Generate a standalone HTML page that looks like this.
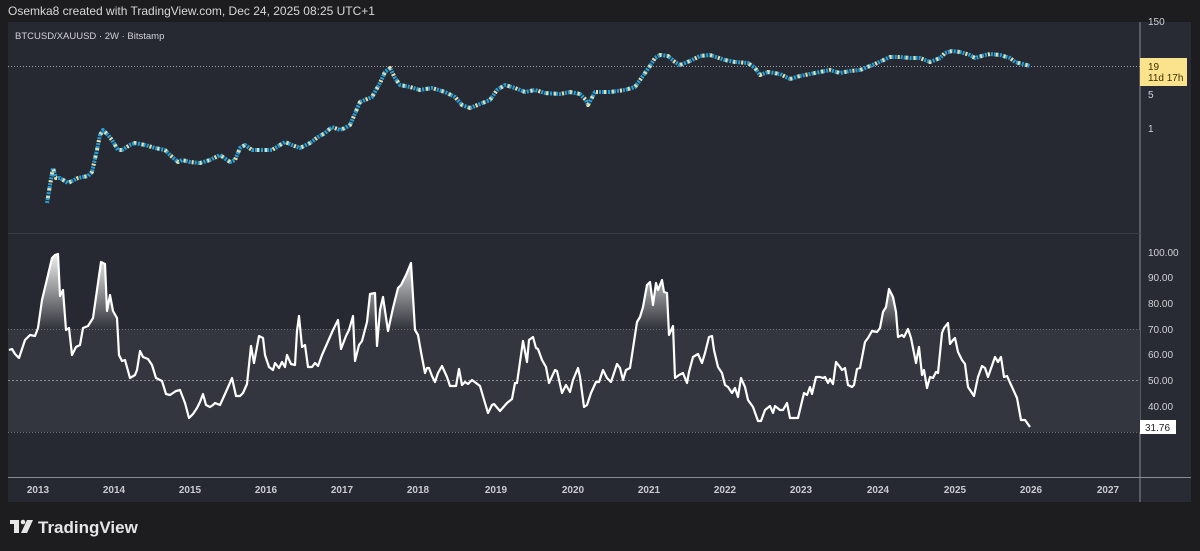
<!DOCTYPE html>
<html><head><meta charset="utf-8"><style>
body{margin:0;width:1200px;height:551px;background:#1d1d1f;overflow:hidden;font-family:"Liberation Sans",sans-serif;}
svg{position:absolute;left:0;top:0}
</style></head><body>
<svg width="1200" height="551" viewBox="0 0 1200 551" xmlns="http://www.w3.org/2000/svg">
<defs>
<linearGradient id="g" x1="0" y1="252" x2="0" y2="329" gradientUnits="userSpaceOnUse">
<stop offset="0" stop-color="#fff" stop-opacity="0.95"/><stop offset="1" stop-color="#fff" stop-opacity="0.05"/></linearGradient>
<clipPath id="c"><rect x="8" y="234" width="1132" height="95"/></clipPath>
</defs>
<text x="8" y="15" font-size="12" fill="#d8d8d8">Osemka8 created with TradingView.com, Dec 24, 2025 08:25 UTC+1</text>
<rect x="8" y="22" width="1183" height="480" fill="#262931"/>
<rect x="1140" y="22" width="51" height="480" fill="#282b33"/>
<line x1="1140" y1="22" x2="1140" y2="502" stroke="#8a8c92" stroke-width="1"/>
<line x1="8" y1="233.5" x2="1140" y2="233.5" stroke="#3a3d45"/>
<line x1="8" y1="477.5" x2="1191" y2="477.5" stroke="#8a8c92"/>
<text x="15" y="39" font-size="9.5" fill="#d0d2d6">BTCUSD/XAUUSD · 2W · Bitstamp</text>
<line x1="8" y1="66.5" x2="1140" y2="66.5" stroke="#9a9ca2" stroke-dasharray="1,2"/>
<g fill="none" stroke-linejoin="round">
<polyline stroke="#2a9fd6" stroke-width="4" stroke-dasharray="2,1" points="47,203 50,185 53,168 56,178 60,178 68,183 78,178 88,176 92,172 97,150 100,135 103,130 108,135 112,140 118,150 122,150 130,145 135,143 145,145 155,148 165,150 170,155 178,162 182,160 190,162 200,163 210,160 220,155 230,162 235,160 240,148 245,145 252,150 262,150 272,150 280,145 285,142 292,145 300,148 310,143 318,137 325,133 332,127 340,130 345,128 350,125 360,102 372,97 380,83 385,72 390,68 395,78 400,85 410,87 420,90 432,88 445,92 455,97 462,105 470,108 480,104 490,100 497,90 505,85 515,88 525,92 535,90 545,93 560,94 570,92 580,94 586,100 588,105 595,92 610,92 625,90 635,87 645,73 650,66 655,58 660,55 668,56 675,62 680,65 690,61 700,56 710,55 725,60 735,62 748,63 755,68 760,75 768,72 780,74 790,79 800,76 810,74 820,72 830,70 840,73 850,71 860,70 875,64 890,57 900,57 910,58 920,58 930,62 940,58 945,53 952,51 960,52 970,55 975,58 985,55 990,54 1000,55 1010,58 1015,62 1030,66"/>
<polyline stroke="#e8e0a8" stroke-width="4" stroke-dasharray="2,6" stroke-dashoffset="3" points="47,203 50,185 53,168 56,178 60,178 68,183 78,178 88,176 92,172 97,150 100,135 103,130 108,135 112,140 118,150 122,150 130,145 135,143 145,145 155,148 165,150 170,155 178,162 182,160 190,162 200,163 210,160 220,155 230,162 235,160 240,148 245,145 252,150 262,150 272,150 280,145 285,142 292,145 300,148 310,143 318,137 325,133 332,127 340,130 345,128 350,125 360,102 372,97 380,83 385,72 390,68 395,78 400,85 410,87 420,90 432,88 445,92 455,97 462,105 470,108 480,104 490,100 497,90 505,85 515,88 525,92 535,90 545,93 560,94 570,92 580,94 586,100 588,105 595,92 610,92 625,90 635,87 645,73 650,66 655,58 660,55 668,56 675,62 680,65 690,61 700,56 710,55 725,60 735,62 748,63 755,68 760,75 768,72 780,74 790,79 800,76 810,74 820,72 830,70 840,73 850,71 860,70 875,64 890,57 900,57 910,58 920,58 930,62 940,58 945,53 952,51 960,52 970,55 975,58 985,55 990,54 1000,55 1010,58 1015,62 1030,66"/>
</g>
<rect x="8" y="329" width="1132" height="103" fill="#33363e"/>
<line x1="8" y1="329.5" x2="1140" y2="329.5" stroke="#6a6d74" stroke-dasharray="1,2"/>
<line x1="8" y1="380.5" x2="1140" y2="380.5" stroke="#8a8d94" stroke-dasharray="2,2"/>
<line x1="8" y1="432.5" x2="1140" y2="432.5" stroke="#6a6d74" stroke-dasharray="1,2"/>
<polygon clip-path="url(#c)" fill="url(#g)" points="9,329 9,350 12,349 15,354 19,358 25,340 30,335 35,336 38,328 42,300 48,275 52,258 55,255 58,254 60,296 63,290 66,330 69,328 72,355 76,347 80,345 83,328 88,326 93,318 97,290 101,262 105,264 107,311 110,295 113,311 117,318 119,355 122,361 125,360 130,378 135,375 137,370 140,351 143,357 148,359 152,365 156,378 162,381 166,394 170,395 173,393 176,391 180,390 185,403 189,418 193,414 197,408 200,402 203,394 206,405 210,407 213,405 215,403 220,405 225,394 229,385 232,378 236,396 240,396 243,393 247,384 251,346 254,363 259,336 263,338 265,355 269,367 273,370 275,363 279,368 282,362 285,367 287,355 291,364 295,365 297,331 299,316 302,347 305,345 308,367 312,367 315,363 318,366 322,355 326,346 333,330 338,320 341,349 346,336 349,330 353,316 355,361 359,345 362,341 367,322 370,294 375,293 377,346 380,310 383,297 388,331 393,308 398,288 401,285 406,275 411,263 415,330 418,335 421,352 425,373 427,368 429,368 432,376 435,382 438,373 442,366 447,377 450,386 456,386 459,369 462,385 465,382 468,384 472,380 480,386 485,403 488,413 492,405 494,404 500,411 507,403 512,399 515,383 517,383 523,341 527,362 529,340 533,337 536,348 538,349 542,360 546,367 549,383 555,370 557,371 562,393 566,385 570,392 573,380 578,368 580,377 584,407 587,405 591,393 596,382 599,382 603,370 607,378 611,382 617,364 620,368 623,380 626,370 630,368 637,322 640,317 643,307 647,285 650,282 653,305 656,283 658,290 662,280 664,292 667,293 669,335 673,326 675,378 679,375 683,373 687,383 689,372 693,357 698,354 702,363 705,353 709,337 712,336 714,350 718,367 722,373 725,385 728,387 732,393 735,388 738,397 741,378 745,387 748,400 753,407 758,421 761,421 765,410 770,406 773,413 775,406 780,410 783,410 787,403 790,418 797,418 798,418 804,393 807,395 810,387 812,394 816,377 820,377 823,378 825,377 828,383 830,379 833,384 836,362 840,367 842,370 845,368 848,385 852,387 854,385 857,369 860,368 865,342 868,338 872,331 877,332 880,328 883,312 886,307 889,289 893,297 896,312 898,337 902,335 904,337 908,329 911,338 916,363 919,347 922,375 924,370 927,388 930,377 933,378 936,372 938,373 942,333 944,328 948,323 950,344 953,340 955,338 958,352 962,360 965,364 968,387 972,393 974,396 978,377 982,366 985,368 988,377 995,357 998,362 1001,357 1004,377 1007,376 1012,387 1017,398 1021,420 1025,420 1030,427 1030,329"/>
<polyline fill="none" stroke="#fff" stroke-width="2.2" stroke-linejoin="round" points="9,350 12,349 15,354 19,358 25,340 30,335 35,336 38,328 42,300 48,275 52,258 55,255 58,254 60,296 63,290 66,330 69,328 72,355 76,347 80,345 83,328 88,326 93,318 97,290 101,262 105,264 107,311 110,295 113,311 117,318 119,355 122,361 125,360 130,378 135,375 137,370 140,351 143,357 148,359 152,365 156,378 162,381 166,394 170,395 173,393 176,391 180,390 185,403 189,418 193,414 197,408 200,402 203,394 206,405 210,407 213,405 215,403 220,405 225,394 229,385 232,378 236,396 240,396 243,393 247,384 251,346 254,363 259,336 263,338 265,355 269,367 273,370 275,363 279,368 282,362 285,367 287,355 291,364 295,365 297,331 299,316 302,347 305,345 308,367 312,367 315,363 318,366 322,355 326,346 333,330 338,320 341,349 346,336 349,330 353,316 355,361 359,345 362,341 367,322 370,294 375,293 377,346 380,310 383,297 388,331 393,308 398,288 401,285 406,275 411,263 415,330 418,335 421,352 425,373 427,368 429,368 432,376 435,382 438,373 442,366 447,377 450,386 456,386 459,369 462,385 465,382 468,384 472,380 480,386 485,403 488,413 492,405 494,404 500,411 507,403 512,399 515,383 517,383 523,341 527,362 529,340 533,337 536,348 538,349 542,360 546,367 549,383 555,370 557,371 562,393 566,385 570,392 573,380 578,368 580,377 584,407 587,405 591,393 596,382 599,382 603,370 607,378 611,382 617,364 620,368 623,380 626,370 630,368 637,322 640,317 643,307 647,285 650,282 653,305 656,283 658,290 662,280 664,292 667,293 669,335 673,326 675,378 679,375 683,373 687,383 689,372 693,357 698,354 702,363 705,353 709,337 712,336 714,350 718,367 722,373 725,385 728,387 732,393 735,388 738,397 741,378 745,387 748,400 753,407 758,421 761,421 765,410 770,406 773,413 775,406 780,410 783,410 787,403 790,418 797,418 798,418 804,393 807,395 810,387 812,394 816,377 820,377 823,378 825,377 828,383 830,379 833,384 836,362 840,367 842,370 845,368 848,385 852,387 854,385 857,369 860,368 865,342 868,338 872,331 877,332 880,328 883,312 886,307 889,289 893,297 896,312 898,337 902,335 904,337 908,329 911,338 916,363 919,347 922,375 924,370 927,388 930,377 933,378 936,372 938,373 942,333 944,328 948,323 950,344 953,340 955,338 958,352 962,360 965,364 968,387 972,393 974,396 978,377 982,366 985,368 988,377 995,357 998,362 1001,357 1004,377 1007,376 1012,387 1017,398 1021,420 1025,420 1030,427"/>
<g font-size="10" fill="#d0d2d6">
<text x="1148" y="25">150</text>
<text x="1148" y="98">5</text>
<text x="1148" y="132">1</text>
<text x="1148" y="256">100.00</text>
<text x="1148" y="281">90.00</text>
<text x="1148" y="307">80.00</text>
<text x="1148" y="333">70.00</text>
<text x="1148" y="358">60.00</text>
<text x="1148" y="384">50.00</text>
<text x="1148" y="410">40.00</text>
</g>
<rect x="1140" y="58" width="47" height="28" fill="#fbe38e"/>
<text x="1148" y="70" font-size="10" fill="#3a3000">19</text>
<text x="1148" y="81" font-size="10" fill="#3a3000">11d 17h</text>
<rect x="1140" y="420" width="36" height="14" fill="#fff"/>
<text x="1145" y="431" font-size="10" fill="#222">31.76</text>
<g font-size="10" font-weight="bold" fill="#c9cbd0" text-anchor="middle">
<text x="38" y="493">2013</text><text x="114" y="493">2014</text><text x="190" y="493">2015</text><text x="266" y="493">2016</text><text x="342" y="493">2017</text><text x="418" y="493">2018</text><text x="496" y="493">2019</text><text x="573" y="493">2020</text><text x="649" y="493">2021</text><text x="725" y="493">2022</text><text x="801" y="493">2023</text><text x="878" y="493">2024</text><text x="955" y="493">2025</text><text x="1031" y="493">2026</text><text x="1108" y="493">2027</text>
</g>
<g fill="#e6e6e6">
<rect x="10" y="520" width="9" height="4"/><rect x="14" y="520" width="5" height="13"/>
<circle cx="23" cy="522" r="2.3"/><polygon points="27,520 33,520 27,533 21,533"/>
<text x="38" y="533" font-size="17" font-weight="bold" fill="#e6e6e6">TradingView</text>
</g>
</svg>
</body></html>
